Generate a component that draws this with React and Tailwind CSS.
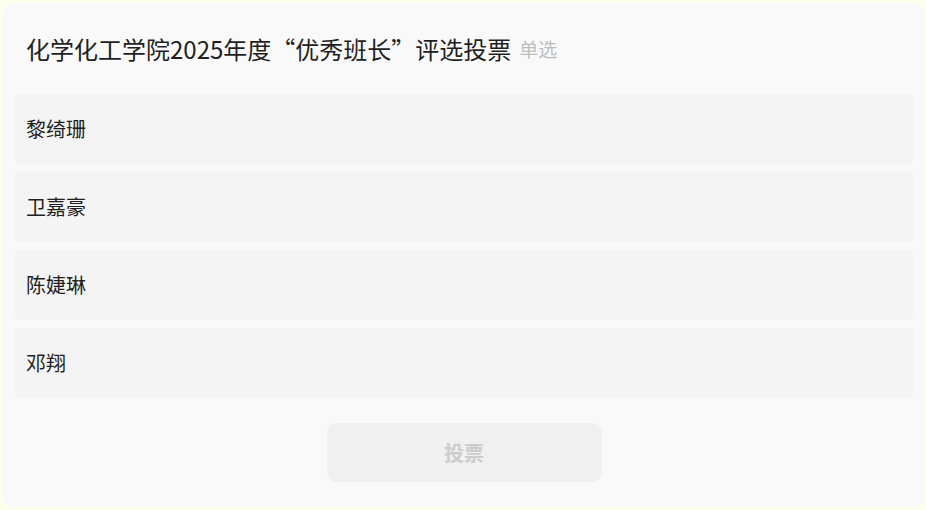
const candidates = ['黎绮珊', '卫嘉豪', '陈婕琳', '邓翔']

export default function App() {
  return (
    <div
      className="min-h-[510px] w-[926px] bg-[#fdffec] pt-[3px] pl-[2px] pr-[1px] pb-[3px]"
      style={{ fontFamily: '"Noto Sans CJK SC", "Noto Sans", sans-serif' }}
    >
      <div className="rounded-[12px] bg-[#f9f9f9] pl-3 pr-[11px]">
        <div className="flex h-[91px] items-center pl-3">
          <h1 className="text-[24px] font-normal text-[#1f1f1f]">
            化学化工学院2025年度“优秀班长”评选投票
          </h1>
          <span className="ml-2 mt-[2px] text-[19px] text-[#bdbdbd]">单选</span>
        </div>
        <div className="flex flex-col gap-2">
          {candidates.map((name) => (
            <div
              key={name}
              className="flex h-[70px] items-center rounded-lg bg-[#f4f4f4] px-3 text-[20px] text-[#1f1f1f]"
            >
              {name}
            </div>
          ))}
        </div>
        <div className="flex justify-center py-[25px]">
          <button
            disabled
            className="h-[59px] w-[275px] rounded-[10px] bg-[#f0f0f0] text-[20px] font-bold text-[#cccccc]"
          >
            投票
          </button>
        </div>
      </div>
    </div>
  )
}
